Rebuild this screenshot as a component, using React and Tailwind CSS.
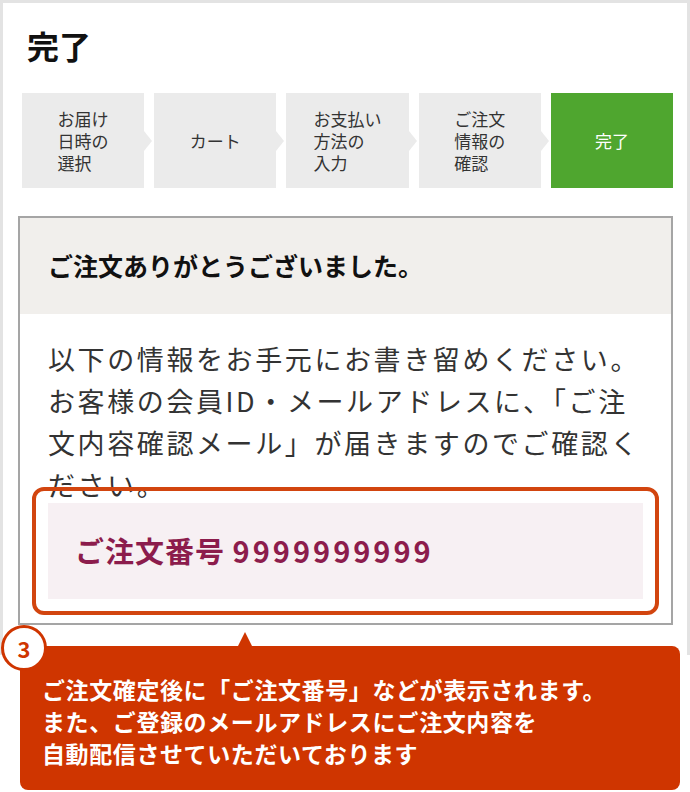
import React from 'react';

const steps = [
  { lines: ['お届け', '日時の', '選択'] },
  { lines: ['カート'] },
  { lines: ['お支払い', '方法の', '入力'] },
  { lines: ['ご注文', '情報の', '確認'] },
  { lines: ['完了'], active: true },
];

const jp = { fontFamily: '"Noto Sans CJK JP", "Noto Sans", sans-serif' };

function Step({ step, last }) {
  return (
    <div
      className={`relative flex h-[95px] flex-1 items-center justify-center ${
        step.active ? 'bg-[#4fa62f] text-white' : 'bg-[#ebebeb] text-[#333]'
      }`}
    >
      <div className="text-left text-[17px] leading-[22px]">
        {step.lines.map((l) => (
          <div key={l}>{l}</div>
        ))}
      </div>
      {!last && (
        // little chevron sticking into the gap
        <span className="absolute right-[-8px] top-1/2 -translate-y-1/2 border-y-[10px] border-l-[8px] border-y-transparent border-l-[#ebebeb]" />
      )}
    </div>
  );
}

export default function App() {
  return (
    <div className="relative h-[792px] w-[690px] overflow-hidden bg-white" style={jp}>
      {/* phone screen */}
      <div className="h-[655px] border-x-[3px] border-t-[3px] border-[#e3e3e3] pl-[15px] pr-[14px]">
        <h1 className="ml-[9px] pt-[23px] text-[32px] font-bold leading-[38px] text-[#111]">完了</h1>

        <div className="ml-[4px] mt-[29px] flex gap-[10px]">
          {steps.map((s, i) => (
            <Step key={i} step={s} last={i === steps.length - 1} />
          ))}
        </div>

        <div className="mt-[28px] border-2 border-[#a5a5a5]">
          <div className="flex h-[96px] items-center bg-[#f1efec] px-[28px]">
            <p className="text-[25px] font-bold text-[#111]">ご注文ありがとうございました。</p>
          </div>
          <div className="px-[28px] pb-[24px] pt-[24px]">
            <p className="text-[27px] leading-[42px] tracking-[2.6px] text-[#333]">
              <span className="block">以下の情報をお手元にお書き留めください。</span>
              <span className="block">お客様の会員ID・メールアドレスに、「ご注</span>
              <span className="block">文内容確認メール」が届きますのでご確認く</span>
              <span className="block">ださい。</span>
            </p>
            <div className="relative mt-[-3px] flex h-[96px] items-center bg-[#f7f0f3] px-[27px]">
              <p className="text-[29px] font-bold tracking-[1px] text-[#8c1c4c]">
                ご注文番号 <span className="tracking-[3px]">9999999999</span>
              </p>
              {/* annotation highlight */}
              <span className="absolute inset-[-16px] rounded-[12px] border-[4px] border-[#d2450f]" />
            </div>
          </div>
        </div>
      </div>

      {/* callout */}
      <div className="absolute left-[20px] right-[10px] top-[646px] h-[144px] rounded-[8px] bg-[#cf3500] px-[22px] pt-[27px]">
        <span className="absolute left-[218px] top-[-14px] border-x-[7px] border-b-[14px] border-x-transparent border-b-[#cf3500]" />
        <p className="text-[23px] font-bold leading-[32px] tracking-[0.6px] text-white">
          <span className="block">ご注文確定後に「ご注文番号」などが表示されます。</span>
          <span className="block">また、ご登録のメールアドレスにご注文内容を</span>
          <span className="block">自動配信させていただいております</span>
        </p>
      </div>
      <div className="absolute left-[1px] top-[625px] flex h-[46px] w-[46px] items-center justify-center rounded-full border-[3px] border-[#cf3500] bg-white text-[22px] font-bold text-[#cf3500]">
        3
      </div>
    </div>
  );
}
